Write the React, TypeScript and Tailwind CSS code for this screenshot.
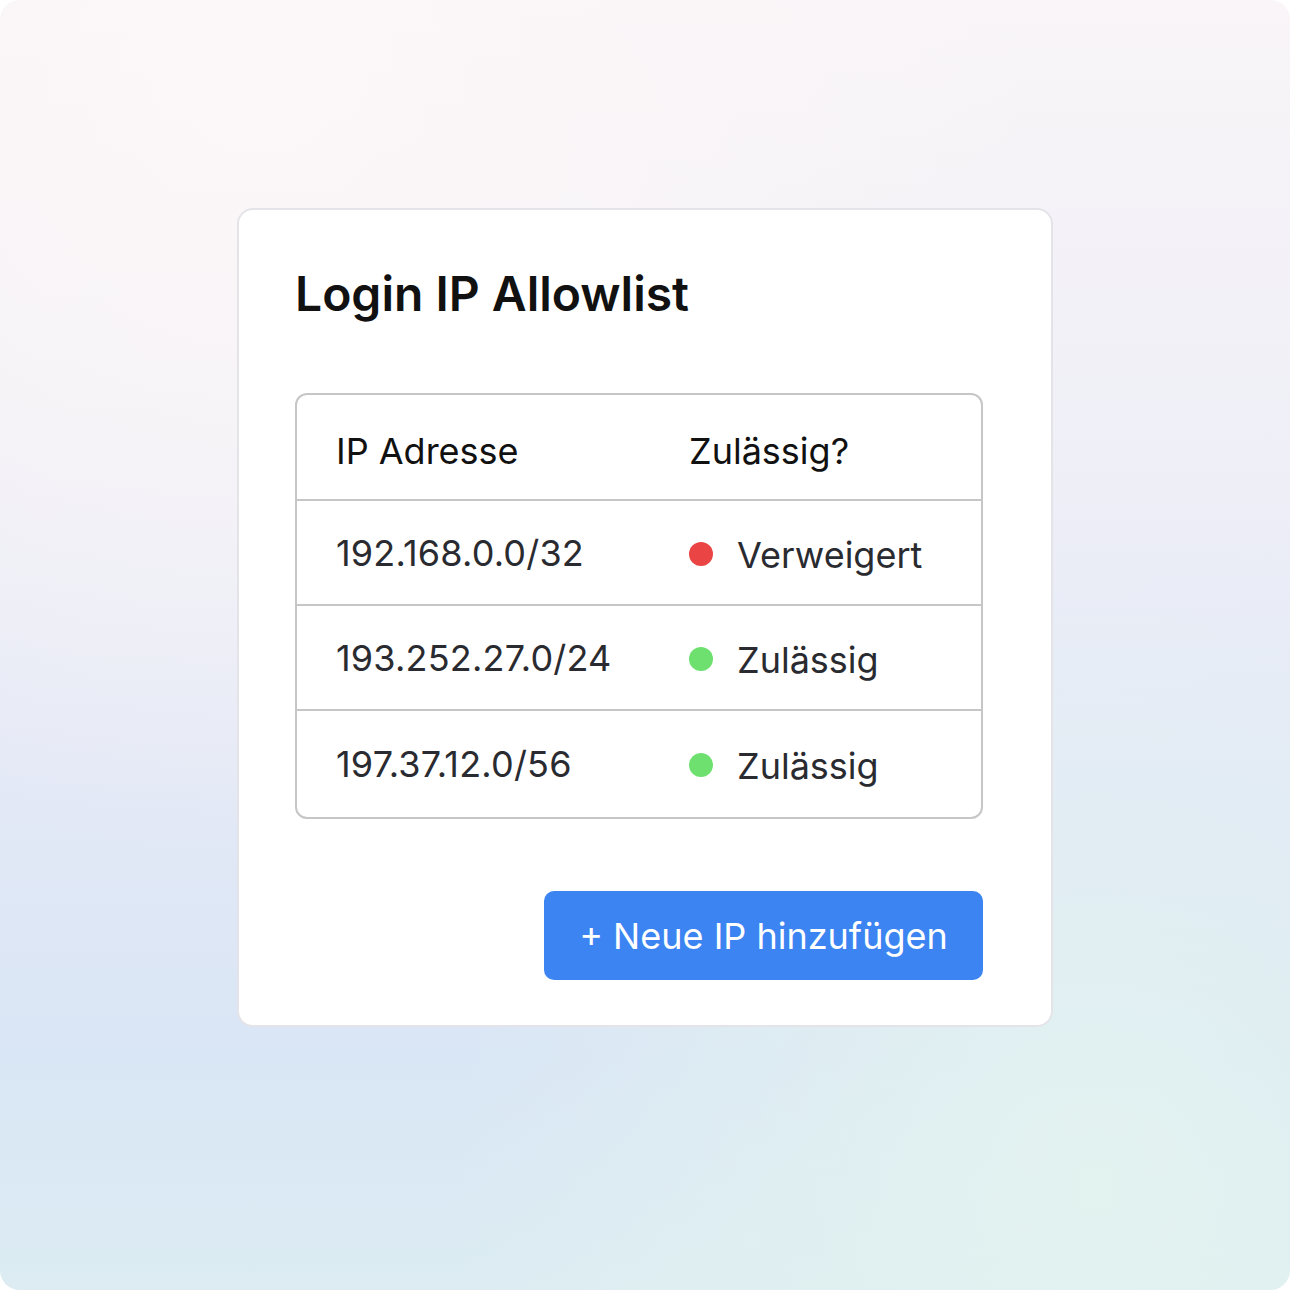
import React from "react"

type Row = { ip: string; allowed: boolean }

const ROWS: Row[] = [
  { ip: "192.168.0.0/32", allowed: false },
  { ip: "193.252.27.0/24", allowed: true },
  { ip: "197.37.12.0/56", allowed: true },
]

export default function App() {
  return (
    <div className="h-[1290px] w-[1290px] bg-white">
      <div
        className="flex h-full w-full justify-center overflow-hidden rounded-[20px] bg-[radial-gradient(circle_at_85%_92%,#e3f3f0_0%,rgba(227,243,240,0)_40%),radial-gradient(circle_at_20%_5%,#fcf7f8_0%,rgba(252,247,248,0)_50%),linear-gradient(180deg,#f9f5f8_0%,#efeff7_35%,#e2e8f6_62%,#d9e6f5_82%,#dcecf2_100%)] pt-[208px]"
        style={{ fontFamily: "Inter, 'Noto Sans', sans-serif" }}
      >
        <div className="h-[819px] w-[816px] rounded-[16px] border-2 border-[#e4e4e8] bg-white pl-[56px] pr-[68px] pt-[52px]">
          <h1 className="text-[48px] font-semibold leading-[64px] text-[#111111]">Login IP Allowlist</h1>

          <div className="mt-[67px] overflow-hidden rounded-[12px] border-2 border-[#c6c6c6]">
            <div className="flex h-[106px] items-center border-b-2 border-[#c6c6c6] pt-[7px] text-[36px] text-[#111111]">
              <div className="w-[392px] pl-[39px]">IP Adresse</div>
              <div>Zulässig?</div>
            </div>
            {ROWS.map((r, i) => (
              <div
                key={r.ip}
                className={
                  "flex items-center text-[36px] text-[#2a2b30] " +
                  (i < ROWS.length - 1 ? "h-[105px] border-b-2 border-[#c6c6c6]" : "h-[106px]")
                }
              >
                <div className="w-[392px] pl-[39px] tracking-[0.2px]">{r.ip}</div>
                <div className="flex items-center">
                  <span
                    className={
                      "mt-[2px] h-[24px] w-[24px] rounded-full " + (r.allowed ? "bg-[#6ee070]" : "bg-[#ea4444]")
                    }
                  />
                  <span className="ml-[24px] pt-[4px]">{r.allowed ? "Zulässig" : "Verweigert"}</span>
                </div>
              </div>
            ))}
          </div>

          <div className="mt-[72px] flex justify-end">
            <button className="h-[89px] w-[439px] rounded-[10px] bg-[#3b84f2] text-[36px] text-white">
              + Neue IP hinzufügen
            </button>
          </div>
        </div>
      </div>
    </div>
  )
}
